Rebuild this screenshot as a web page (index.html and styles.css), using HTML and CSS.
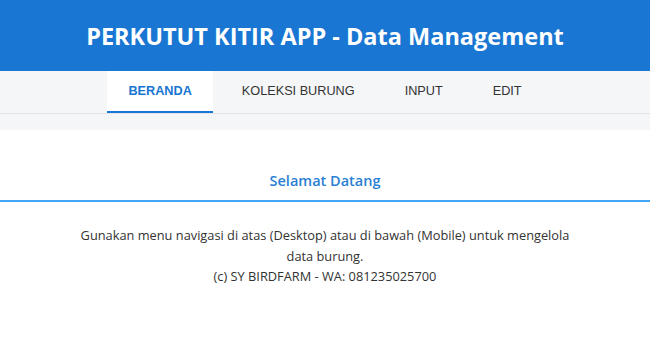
FILE: index.html
```html
<!DOCTYPE html>
<html lang="id">
<head>
    <meta charset="UTF-8">
    <meta name="viewport" content="width=device-width, initial-scale=1.0">
    <title>Perkutut Kitir App</title>
    <link rel="stylesheet" href="styles.css">
</head>
<body>
    <header class="app-header">
        <h1>PERKUTUT KITIR APP - Data Management</h1>
    </header>

    <nav class="main-nav">
        <a href="#" class="nav-link active">BERANDA</a>
        <a href="#" class="nav-link">KOLEKSI BURUNG</a>
        <a href="#" class="nav-link">INPUT</a>
        <a href="#" class="nav-link">EDIT</a>
    </nav>

    <main class="content">
        <h2 class="section-title">Selamat Datang</h2>
        <p class="intro">
            Gunakan menu navigasi di atas (Desktop) atau di bawah (Mobile) untuk mengelola data burung.<br>
            (c) SY BIRDFARM - WA: 081235025700
        </p>
    </main>
</body>
</html>
```

FILE: styles.css
```css
body {
    margin: 0;
    min-height: 100vh;
    display: flex;
    flex-direction: column;
    font-family: "Open Sans", "Noto Sans", sans-serif;
    background-color: #f5f6f8;
    color: #333;
}
.app-header {
    background-color: #1976d2;
    height: 71px;
    display: flex;
    align-items: center;
    justify-content: center;
}
.app-header h1 {
    margin: 0;
    color: #fff;
    font-size: 23.5px;
    font-weight: 700;
}
.main-nav {
    display: flex;
    justify-content: center;
    gap: 8px;
    background-color: #f5f6f8;
    border-bottom: 1px solid #e2e4e8;
}
.nav-link {
    padding: 0 21px;
    height: 40px;
    display: flex;
    align-items: center;
    font-family: "Liberation Sans", Arial, sans-serif;
    font-size: 12.7px;
    color: #333;
    text-decoration: none;
    border-bottom: 2px solid transparent;
}
.nav-link.active {
    background-color: #fff;
    color: #1976d2;
    font-weight: 700;
    border-bottom-color: #1976d2;
}
.content {
    flex: 1;
    background-color: #fff;
    margin-top: 16px;
    padding-top: 41px;
}
.section-title {
    margin: 0;
    padding-bottom: 10px;
    text-align: center;
    font-size: 14.5px;
    font-weight: 600;
    color: #2a7fd4;
    border-bottom: 2px solid #42a5f5;
}
.intro {
    max-width: 510px;
    margin: 23px auto 0;
    text-align: center;
    font-size: 12.8px;
    line-height: 20.5px;
}
```
